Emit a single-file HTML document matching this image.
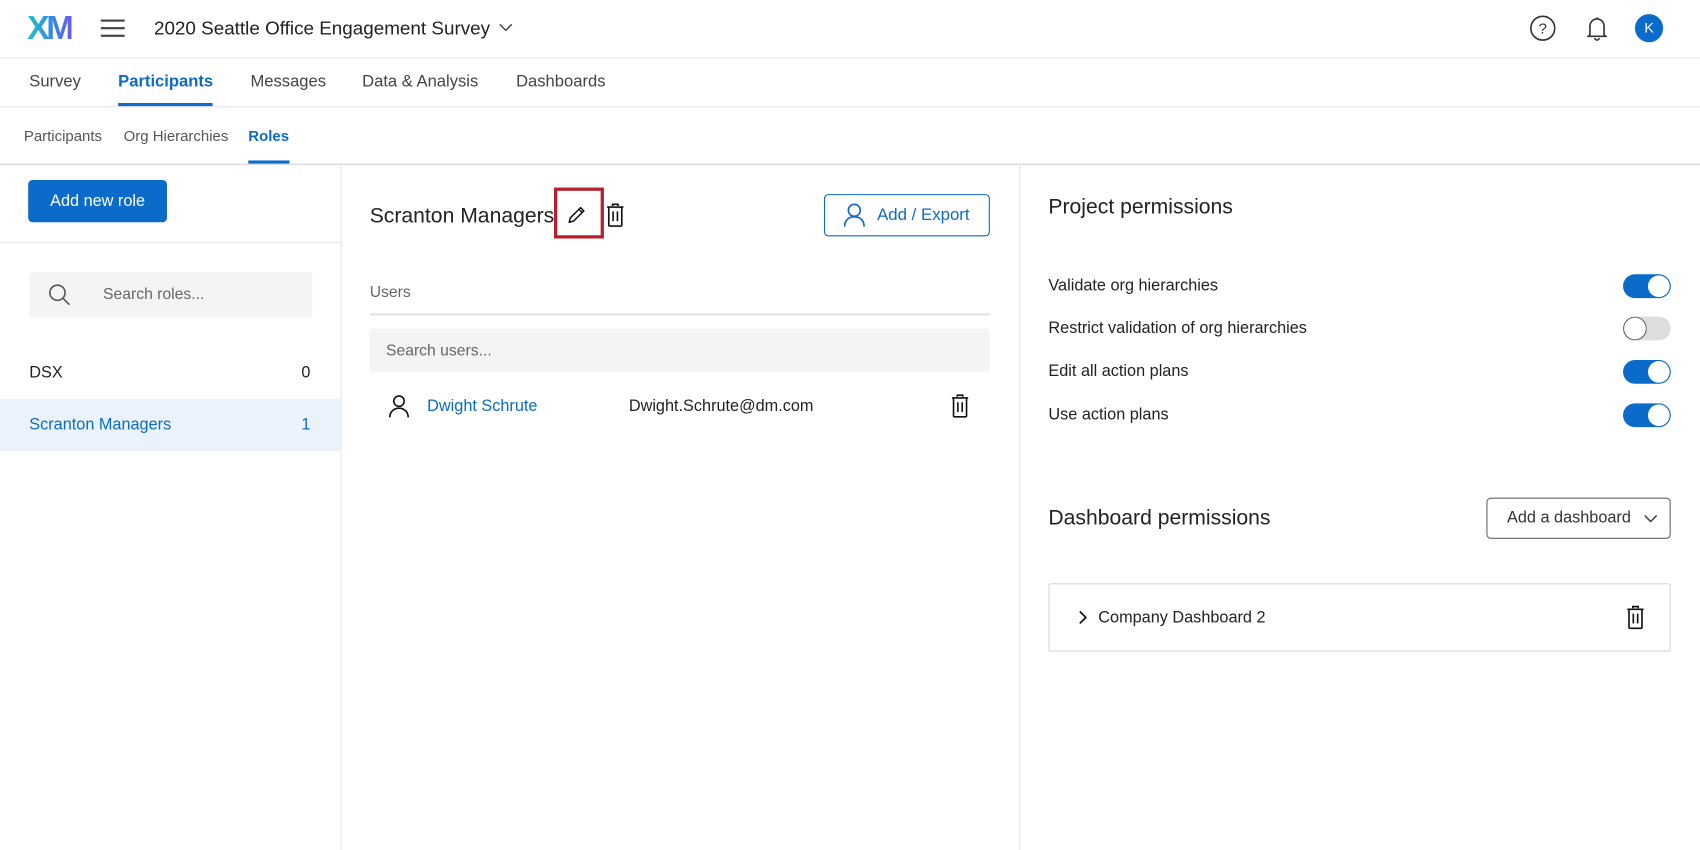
<!DOCTYPE html>
<html><head><meta charset="utf-8"><style>
*{margin:0;padding:0;box-sizing:border-box}
html,body{width:1700px;height:850px;overflow:hidden;background:#fff}
#w{position:absolute;left:0;top:0;width:1568px;height:784px;transform:scale(1.08418);transform-origin:0 0;font-family:"Liberation Sans",sans-serif;color:#222}
.a{position:absolute;white-space:nowrap}
.t{position:absolute;white-space:nowrap;line-height:20px}
.blue{color:#0b6bcb}
.tog{position:absolute;left:1497px;width:44px;height:22px;border-radius:11px;background:#0b6bcb}
.tog::after{content:"";position:absolute;right:1px;top:1px;width:20px;height:20px;border-radius:50%;background:#fff;box-shadow:0 0 0 1px #0b6bcb}
.tog.off{background:#ddd}
.tog.off::after{right:auto;left:0;top:0;width:22px;height:22px;box-shadow:0 0 0 1px #666 inset}
</style></head><body><div id="w">
<div class="a" style="left:25px;top:10px;font-size:31px;font-weight:bold;letter-spacing:-3px;line-height:32px;background:linear-gradient(90deg,#20c4c4,#2e8ee8 50%,#6a5ce8);-webkit-background-clip:text;color:transparent">XM</div>
<div class="a" style="left:93px;top:18px;width:22px;height:2px;background:#444;box-shadow:0 7px 0 #444,0 14px 0 #444"></div>
<div class="t" style="left:142px;top:16px;font-size:17.4px">2020 Seattle Office Engagement Survey</div>
<svg class="a" style="left:460px;top:21px" width="13" height="9" viewBox="0 0 13 9"><path d="M1 1.5l5.5 5.5 5.5-5.5" fill="none" stroke="#444" stroke-width="1.4"/></svg>
<svg class="a" style="left:1411px;top:14px" width="24" height="24" viewBox="0 0 24 24"><circle cx="12" cy="12" r="11" fill="none" stroke="#333" stroke-width="1.5"/><text x="12" y="17" text-anchor="middle" font-size="14" font-family="Liberation Sans" fill="#333">?</text></svg>
<svg class="a" style="left:1462px;top:14px" width="22" height="24" viewBox="0 0 22 24"><path d="M11 2v1.5M4.5 18V10a6.5 6.5 0 0113 0v8l1.5 1.5H3L4.5 18zM9 21a2 2 0 004 0" fill="none" stroke="#333" stroke-width="1.5"/></svg>
<div class="a" style="left:1508px;top:13px;width:26px;height:26px;border-radius:50%;background:#0b6bcb;color:#fff;font-size:13px;text-align:center;line-height:26px">K</div>
<div class="a" style="left:0;top:53px;width:1568px;height:1px;background:#e6e6e6"></div>
<div class="t" style="left:27px;top:66px;font-size:15.3px;color:#444">Survey</div>
<div class="t" style="left:109px;top:66px;font-size:15.3px;font-weight:bold" ><span class="blue">Participants</span></div>
<div class="a" style="left:109px;top:95px;width:87px;height:3px;background:#0b6bcb"></div>
<div class="t" style="left:231px;top:66px;font-size:15.3px;color:#444">Messages</div>
<div class="t" style="left:334px;top:66px;font-size:15.3px;color:#444">Data &amp; Analysis</div>
<div class="t" style="left:476px;top:66px;font-size:15.3px;color:#444">Dashboards</div>
<div class="a" style="left:0;top:98px;width:1568px;height:1px;background:#e6e6e6"></div>
<div class="t" style="left:22px;top:116px;font-size:13.8px;color:#555">Participants</div>
<div class="t" style="left:114px;top:116px;font-size:13.8px;color:#555">Org Hierarchies</div>
<div class="t" style="left:229px;top:116px;font-size:13.8px;font-weight:bold"><span class="blue">Roles</span></div>
<div class="a" style="left:229px;top:148px;width:38px;height:3px;background:#0b6bcb"></div>
<div class="a" style="left:0;top:151px;width:1568px;height:1px;background:#d0d0d0"></div>
<div class="a" style="left:314px;top:152px;width:1px;height:632px;background:#e6e6e6"></div>
<div class="a" style="left:26px;top:166px;width:128px;height:39px;background:#0b6bcb;border-radius:4px;color:#fff;font-size:15px;text-align:center;line-height:39px">Add new role</div>
<div class="a" style="left:0;top:223px;width:314px;height:1px;background:#e6e6e6"></div>
<div class="a" style="left:27px;top:251px;width:261px;height:42px;background:#f4f4f4;border-radius:3px"></div>
<svg class="a" style="left:44px;top:261px" width="22" height="22" viewBox="0 0 22 22"><circle cx="9" cy="9" r="7" fill="none" stroke="#555" stroke-width="1.5"/><path d="M14 14l6 6" stroke="#555" stroke-width="1.5"/></svg>
<div class="t" style="left:95px;top:262px;font-size:14.5px;color:#666">Search roles...</div>
<div class="t" style="left:27px;top:334px;font-size:15px">DSX</div>
<div class="t" style="left:278px;top:334px;font-size:15px">0</div>
<div class="a" style="left:0;top:368px;width:314px;height:48px;background:#eaf2fb"></div>
<div class="t blue" style="left:27px;top:382px;font-size:15px">Scranton Managers</div>
<div class="t blue" style="left:278px;top:382px;font-size:15px">1</div>
<div class="a" style="left:940px;top:152px;width:1px;height:632px;background:#e6e6e6"></div>
<div class="t" style="left:341px;top:188px;font-size:19.5px;line-height:22px">Scranton Managers</div>
<div class="a" style="left:511px;top:173px;width:46px;height:47px;border:3px solid #b5202e"></div>
<svg class="a" style="left:523px;top:189px" width="18" height="18" viewBox="0 0 18 18"><path d="M2 16l1-4L12.5 2.5l3 3L6 15zM11 4l3 3" fill="none" stroke="#111" stroke-width="1.4" stroke-linejoin="round"/></svg>
<svg class="a trash" style="left:559px;top:187px" width="17" height="23" viewBox="0 0 17 23"><path d="M6 3V1.5h5V3M1 4h15M2.5 4v16.5a1 1 0 001 1h10a1 1 0 001-1V4M6.5 8v9M10.5 8v9" fill="none" stroke="#111" stroke-width="1.5"/></svg>
<div class="a" style="left:760px;top:179px;width:153px;height:39px;border:1px solid #0b6bcb;border-radius:4px"></div>
<svg class="a" style="left:777px;top:187px" width="22" height="23" viewBox="0 0 22 23"><circle cx="11" cy="7" r="5.5" fill="none" stroke="#0b6bcb" stroke-width="1.5"/><path d="M2 22c0-6 4-9 9-9s9 3 9 9" fill="none" stroke="#0b6bcb" stroke-width="1.5"/></svg>
<div class="t blue" style="left:809px;top:189px;font-size:15.5px">Add / Export</div>
<div class="t" style="left:341px;top:260px;font-size:14.5px;color:#666">Users</div>
<div class="a" style="left:341px;top:289px;width:572px;height:2px;background:#e2e2e2"></div>
<div class="a" style="left:341px;top:303px;width:572px;height:40px;background:#f4f4f4;border-radius:3px"></div>
<div class="t" style="left:356px;top:314px;font-size:14.5px;color:#666">Search users...</div>
<svg class="a" style="left:358px;top:364px" width="20" height="22" viewBox="0 0 20 22"><circle cx="10" cy="6" r="4.8" fill="none" stroke="#111" stroke-width="1.5"/><path d="M1.5 21c0-5 3.5-8.5 8.5-8.5s8.5 3.5 8.5 8.5" fill="none" stroke="#111" stroke-width="1.5"/></svg>
<div class="t blue" style="left:394px;top:365px;font-size:15px">Dwight Schrute</div>
<div class="t" style="left:580px;top:365px;font-size:15px">Dwight.Schrute@dm.com</div>
<svg class="a" style="left:877px;top:363px" width="17" height="23" viewBox="0 0 17 23"><path d="M6 3V1.5h5V3M1 4h15M2.5 4v16.5a1 1 0 001 1h10a1 1 0 001-1V4M6.5 8v9M10.5 8v9" fill="none" stroke="#111" stroke-width="1.5"/></svg>
<div class="t" style="left:967px;top:180px;font-size:19.5px;line-height:22px">Project permissions</div>
<div class="t" style="left:967px;top:254px;font-size:15px">Validate org hierarchies</div>
<div class="t" style="left:967px;top:293px;font-size:15px">Restrict validation of org hierarchies</div>
<div class="t" style="left:967px;top:333px;font-size:15px">Edit all action plans</div>
<div class="t" style="left:967px;top:373px;font-size:15px">Use action plans</div>
<div class="tog" style="top:253px"></div>
<div class="tog off" style="top:292px"></div>
<div class="tog" style="top:332px"></div>
<div class="tog" style="top:372px"></div>
<div class="t" style="left:967px;top:467px;font-size:19.5px;line-height:22px">Dashboard permissions</div>
<div class="a" style="left:1371px;top:459px;width:170px;height:38px;border:1px solid #666;border-radius:4px"></div>
<div class="t" style="left:1390px;top:468px;font-size:15px;color:#333">Add a dashboard</div>
<svg class="a" style="left:1516px;top:474px" width="13" height="9" viewBox="0 0 13 9"><path d="M1 1.5l5.5 5.5 5.5-5.5" fill="none" stroke="#444" stroke-width="1.4"/></svg>
<div class="a" style="left:967px;top:538px;width:574px;height:63px;border:1px solid #d8d8d8;border-radius:2px"></div>
<svg class="a" style="left:994px;top:562px" width="10" height="15" viewBox="0 0 10 15"><path d="M2 2l5.5 5.5L2 13" fill="none" stroke="#111" stroke-width="1.6"/></svg>
<div class="t" style="left:1013px;top:560px;font-size:15px">Company Dashboard 2</div>
<svg class="a" style="left:1500px;top:558px" width="17" height="23" viewBox="0 0 17 23"><path d="M6 3V1.5h5V3M1 4h15M2.5 4v16.5a1 1 0 001 1h10a1 1 0 001-1V4M6.5 8v9M10.5 8v9" fill="none" stroke="#111" stroke-width="1.5"/></svg>
</div></body></html>
